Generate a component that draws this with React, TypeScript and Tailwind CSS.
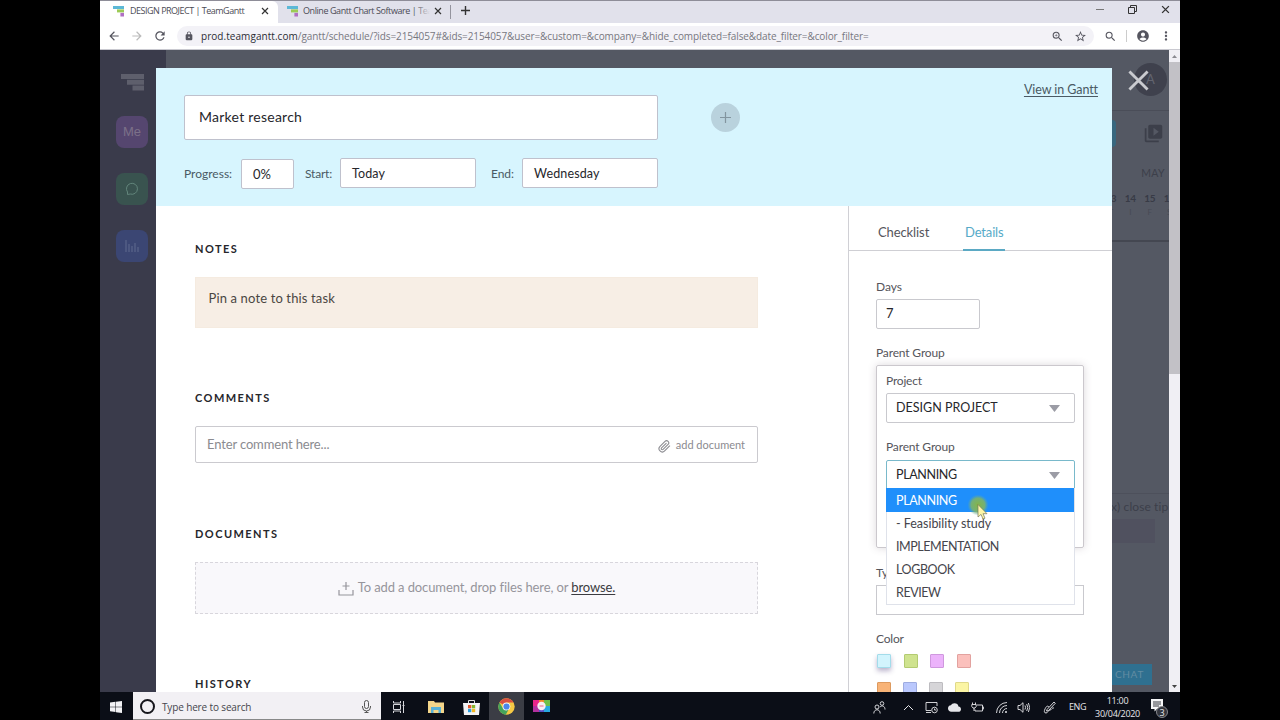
import React from "react";
import { FiPaperclip } from "react-icons/fi";
import {
  MdAccountCircle,
  MdArrowBack,
  MdArrowForward,
  MdCloud,
  MdLock,
  MdMoreVert,
  MdRefresh,
  MdSearch,
  MdStarBorder,
  MdVideoLibrary,
  MdZoomIn,
} from "react-icons/md";

const Logo = () => (
  <svg width="11" height="11" viewBox="0 0 11 11" className="shrink-0">
    <rect x="0" y="0" width="11" height="3" fill="#5cb8d6" />
    <rect x="4" y="3.4" width="7" height="3" fill="#9ccb55" />
    <rect x="7.4" y="6.9" width="3.6" height="3.6" fill="#b06fc4" />
  </svg>
);

const CloseX = ({ size = 8 }: { size?: number }) => (
  <svg width={size} height={size} viewBox="0 0 8 8" stroke="#333" strokeWidth="1.2" className="shrink-0">
    <path d="M1 1l6 6M7 1l-6 6" />
  </svg>
);

const TabStrip = () => (
  <div className="flex h-[23px] items-stretch border-t border-[#8e8d98] bg-[#e1e1eb] text-[9px] text-[#4b4b55]">
    <div className="flex w-[178px] items-center rounded-tr-md bg-white pb-[2px] pl-[13px] pr-[9px]">
      <Logo />
      <span className="ml-[6px] flex-1 whitespace-nowrap tracking-[-0.5px]">DESIGN PROJECT | TeamGantt</span>
      <CloseX />
    </div>
    <div className="flex w-[172px] items-center pb-[2px] pl-[9px] pr-[8px]">
      <Logo />
      <span className="relative ml-[5px] w-[127px] overflow-hidden whitespace-nowrap tracking-[-0.43px]">
        Online Gantt Chart Software | Tea
        <span className="absolute inset-y-0 right-0 w-4 bg-gradient-to-r from-transparent to-[#e1e1eb]" />
      </span>
      <span className="flex-1" />
      <CloseX />
    </div>
    <div className="my-1 w-px bg-[#94949e]" />
    <svg width="9" height="9" viewBox="0 0 9 9" stroke="#333" strokeWidth="1.4" className="mb-[3px] ml-[10px] self-center">
      <path d="M4.5 0v9M0 4.5h9" />
    </svg>
    <div className="flex-1" />
    <div className="mr-[10px] flex w-[74px] items-center justify-between pb-[6px]">
      <span className="h-px w-[8px] bg-[#777]" />
      <svg width="9" height="9" viewBox="0 0 9 9" fill="none" stroke="#333" strokeWidth="1">
        <path d="M.5 2.5h6v6h-6zM2.5 2.5v-2h6v6h-2" />
      </svg>
      <CloseX size={9} />
    </div>
  </div>
);

const AddressBar = () => (
  <div className="flex h-[27px] items-center border-b border-[#c9c9d0] bg-white text-[#55555f]">
    <MdArrowBack className="ml-[7px] h-[14px] w-[14px]" />
    <MdArrowForward className="ml-[9px] h-[14px] w-[14px] text-[#bbb]" />
    <MdRefresh className="ml-[9px] h-[14px] w-[14px]" />
    <div className="ml-[10px] flex h-[20px] w-[917px] items-center rounded-full bg-[#f3f2f7]">
      <MdLock className="ml-[7px] h-[10px] w-[10px]" />
      <span className="ml-[7px] flex-1 whitespace-nowrap text-[10px] tracking-[-0.1px] text-[#777780]">
        <span className="tracking-[0.05px] text-[#2c2c34]">prod.teamgantt.com</span>
        /gantt/schedule/?ids=2154057#&amp;ids=2154057&amp;user=&amp;custom=&amp;company=&amp;hide_completed=false&amp;date_filter=&amp;color_filter=
      </span>
      <MdZoomIn className="h-[13px] w-[13px]" />
      <MdStarBorder className="ml-[10px] mr-[7px] h-[13px] w-[13px]" />
    </div>
    <MdSearch className="ml-[10px] h-[13px] w-[13px]" />
    <span className="ml-[9px] h-3 w-px bg-[#ccc]" />
    <MdAccountCircle className="ml-[9px] h-[14px] w-[14px]" />
    <MdMoreVert className="ml-[9px] h-[14px] w-[14px]" />
  </div>
);

const Sidebar = () => (
  <div className="flex w-[66px] flex-col items-center bg-[#3a3b4b] pr-[2px]">
    <svg width="23" height="17" viewBox="0 0 23 17" fill="#5e5f6c" className="mt-[24px]">
      <path d="M0 0h23v5H0zM6 5.7h17v5H6zM11.5 11.5h11.5v5h-11.5z" />
    </svg>
    <div className="mt-[25px] flex h-[32px] w-[32px] items-center justify-center rounded-lg bg-[#55466f] pb-px font-['Liberation_Sans',sans-serif] text-[13px] text-[#7c7189]">
      Me
    </div>
    <div className="mt-[25px] flex h-[32px] w-[32px] items-center justify-center rounded-lg bg-[#39534f] pb-px">
      <svg width="14" height="14" viewBox="0 0 14 14" fill="none" stroke="#62857b" strokeWidth="1">
        <path d="M2.5 12.5V10A5.500 5.500 0 1 1 5.200 12z" />
      </svg>
    </div>
    <div className="mt-[25px] flex h-[32px] w-[32px] items-center justify-center rounded-lg bg-[#3b4673] pb-px">
      <svg width="14" height="12" viewBox="0 0 14 12" stroke="#606a90" strokeWidth="1">
        <path d="M1 0v12M4 4v8M7 6v6M10 3v9M13 7v5" />
      </svg>
    </div>
  </div>
);

const GanttBackdrop = () => (
  <div className="flex flex-1 flex-col items-end overflow-hidden bg-[#545863] text-[#3c3f4a]">
    <div className="flex h-[61px] w-full justify-end border-b border-[#4a4d58]">
      <div className="mr-[2px] mt-[13px] flex h-[33px] w-[33px] items-center justify-center rounded-full bg-[#3f414d] text-[13px] text-[#62646f]">
        A
      </div>
    </div>
    <div className="mt-[9px] flex h-[27px] items-center">
      <div className="h-full w-[30px] rounded-sm bg-[#38677e]" />
      <MdVideoLibrary className="ml-[27px] mr-[5px] h-[21px] w-[21px]" />
    </div>
    <div className="mr-[4px] mt-[18px] h-[16px] text-[10.5px] leading-4 tracking-[0.4px]">MAY</div>
    <div className="mt-[9px] flex w-[68px] text-[10px] font-bold leading-4 tracking-[-0.3px] text-[#383b46]">
      {["13", "14", "15", "16"].map((d) => (
        <span key={d} className="w-[19.5px] shrink-0 text-center">{d}</span>
      ))}
    </div>
    <div className="flex w-[68px] text-[8px] leading-3 text-[#474a55]">
      {["T", "I", "F", "S"].map((d) => (
        <span key={d} className="w-[19.5px] shrink-0 text-center">{d}</span>
      ))}
    </div>
    <div className="mt-[22px] h-[2px] w-full bg-[#444751]" />
    <div className="mt-[251px] h-[26px] w-[58px] overflow-hidden whitespace-nowrap border-t border-[#4d505b] text-[12px] leading-[25px] tracking-[0.1px]">
      x) close tip
    </div>
    <div className="mr-[14px] h-[24px] w-[50px] bg-[#50515f]" />
    <div className="mr-[17px] mt-auto mb-[7px] flex h-[21px] w-[60px] items-center justify-end bg-[#2f7090] pr-[8px] text-[10px] tracking-[0.7px] text-[#628ca2]">
      CHAT
    </div>
  </div>
);

const Scrollbar = () => (
  <div className="flex w-[11px] flex-col items-center bg-[#f0eff4]">
    <svg width="5" height="12" viewBox="0 0 5 12" fill="#8a8a90">
      <path d="M0 8l2.5-3L5 8z" />
    </svg>
    <div className="h-[312px] w-full bg-[#c2c1c6]" />
    <svg width="5" height="12" viewBox="0 0 5 12" fill="#444" className="mt-auto">
      <path d="M0 5l2.5 3L5 5z" />
    </svg>
  </div>
);

const field = "flex items-center rounded-[2px] border bg-white whitespace-nowrap";

const ModalHeader = () => (
  <div className="flex h-[138px] bg-[#d7f5fe] pl-[28px] pr-[14px] text-[#4a5a64]">
    <div className="w-[474px] pt-[27px]">
      <div className={`${field} h-[45px] border-[#bfc1cd] pb-[2px] pl-[14px] text-[14px] tracking-[0.25px] text-[#26262b]`}>
        Market research
      </div>
      <div className="mt-[18px] flex h-[31px] items-start whitespace-nowrap text-[12px] leading-[31px]">
        <span className="w-[57px]">Progress:</span>
        <div className={`${field} mt-px h-[30px] w-[53px] border-[#bfc1cd] pl-[11px] text-[13px] text-[#26262b]`}>0%</div>
        <span className="ml-[11px] w-[35px] tracking-[-0.2px]">Start:</span>
        <div className={`${field} h-[30px] w-[136px] border-[#bfc1cd] pl-[11px] pt-px text-[12.5px] tracking-[0.1px] text-[#26262b]`}>Today</div>
        <span className="ml-[15px] w-[31px] tracking-[-0.1px]">End:</span>
        <div className={`${field} h-[30px] flex-1 border-[#bfc1cd] pl-[11px] pt-px text-[12.5px] tracking-[0.15px] text-[#26262b]`}>Wednesday</div>
      </div>
    </div>
    <div className="ml-[53px] mt-[35px] flex h-[29px] w-[29px] items-center justify-center rounded-full bg-[#b9d2dd]">
      <svg width="11" height="11" viewBox="0 0 11 11" stroke="#83959f" strokeWidth="1.2">
        <path d="M5.5 0v11M0 5.5h11" />
      </svg>
    </div>
    <span className="ml-auto mt-[12px] text-[12.5px] leading-[19px] tracking-[-0.08px] underline underline-offset-2">View in Gantt</span>
  </div>
);

const Heading = ({ children }: { children: React.ReactNode }) => (
  <h3 className="h-4 text-[11px] font-bold leading-[17px] tracking-[1.45px] text-[#26262b]">{children}</h3>
);

const ModalMain = () => (
  <div className="w-[692px] overflow-hidden pl-[39px] pr-[90px] pt-[34px]">
    <Heading>NOTES</Heading>
    <div className="mt-[21px] h-[51px] border border-[#f5ebe0] bg-[#f7eee5] pl-[12.5px] pt-[10px] text-[13px] leading-5 tracking-[0.14px] text-[#4a4642]">
      Pin a note to this task
    </div>
    <div className="mt-[61px]">
      <Heading>COMMENTS</Heading>
    </div>
    <div className="mt-[21px] flex h-[37px] items-center rounded-[2px] border border-[#cbcacf] pl-[11px] pr-[12px] text-[13px] text-[#8b8b90]">
      <span className="tracking-[-0.14px]">Enter comment here...</span>
      <FiPaperclip className="ml-auto mt-[3px] h-[13px] w-[13px]" />
      <span className="ml-[5px] pt-px text-[11px]">add document</span>
    </div>
    <div className="mt-[62px]">
      <Heading>DOCUMENTS</Heading>
    </div>
    <div className="mt-[21px] flex h-[52px] items-center justify-center border border-dashed border-[#d8d6dc] bg-[#f9f8fb] text-[13px] tracking-[-0.11px] text-[#96959c]">
      <svg width="16" height="15" viewBox="0 0 16 15" fill="none" stroke="currentColor" strokeWidth="1.2" className="mr-[4px]">
        <path d="M1 9v5h14V9M8 1v8M4.500 5h7" />
      </svg>
      <span>To add a document, drop files here, or <span className="text-[#3b3b40] underline underline-offset-2">browse.</span></span>
    </div>
    <div className="mt-[61px]">
      <Heading>HISTORY</Heading>
    </div>
  </div>
);

const Caret = () => (
  <svg width="11" height="7" viewBox="0 0 11 7" fill="#9b9ca5" className="ml-auto mr-[14px]">
    <path d="M0 0h11L5.5 7z" />
  </svg>
);

const groups = [
  { name: "PLANNING", tracking: "tracking-[-0.35px]" },
  { name: "- Feasibility study", tracking: "tracking-[-0.03px]" },
  { name: "IMPLEMENTATION", tracking: "tracking-[-0.45px]" },
  { name: "LOGBOOK", tracking: "tracking-[-0.4px]" },
  { name: "REVIEW", tracking: "tracking-[-0.45px]" },
];

const Dropdown = () => (
  <div className="absolute -left-px top-[27px] z-10 w-[189px] border border-t-0 border-[#dfe2ea] bg-white text-[12.5px] text-[#45454c]">
    {groups.map((g, i) => (
      <div
        key={g.name}
        className={`${g.tracking} ${
          i === 0
            ? "-ml-px flex h-[24px] items-center bg-[#1f8ffb] pl-[10px] pt-[2px] text-white"
            : "flex h-[23px] items-center pl-[9px] pt-[2px]"
        }`}
      >
        {g.name}
      </div>
    ))}
    {/* mouse pointer with the click highlight */}
    <svg width="24" height="28" viewBox="0 0 24 28" className="absolute left-[80px] top-[6px]">
      <defs>
        <radialGradient id="click">
          <stop offset="0" stopColor="#86b545" />
          <stop offset="0.65" stopColor="#7cb36a" stopOpacity="0.9" />
          <stop offset="1" stopColor="#5aa5a8" stopOpacity="0" />
        </radialGradient>
      </defs>
      <circle cx="11" cy="11" r="10.5" fill="url(#click)" />
      <path d="M11 10.5v12.5l3-2.600 2 4.600 2-.8-2-4.500h4z" fill="#fbf6a8" stroke="#77775c" strokeWidth="0.7" />
    </svg>
  </div>
);

const colors = [
  [
    "bg-[#d2f4fd] border-[#a3dcea] shadow-[0_3px_5px_rgba(60,40,110,0.35)]",
    "bg-[#cfe38f] border-[#b3cb72]",
    "bg-[#ecb3fb] border-[#cf98de]",
    "bg-[#fbc0bc] border-[#e2a29f]",
  ],
  [
    "bg-[#f8b377] border-[#dd9a5f]",
    "bg-[#bac8fd] border-[#9eace0]",
    "bg-[#d6d5d8] border-[#bdbcc0]",
    "bg-[#fbf5a4] border-[#e0d98a]",
  ],
];

const ModalDetails = () => (
  <div className="flex-1 overflow-hidden border-l border-[#d0d0d5] text-[#55555b]">
    <div className="flex h-[45px] border-b border-[#cfcfd4] pl-[29px] text-[13px]">
      <span className="w-[85px] pt-[17px] leading-[18px] tracking-[-0.1px]">Checklist</span>
      <span className="h-[45px] w-[42px] border-b-2 border-[#5ba9c4] pl-[2px] pt-[17px] leading-[18px] tracking-[-0.15px] text-[#56aac8]">Details</span>
    </div>
    <div className="px-[27px] pt-[27px] text-[12px]">
      <div className="h-4 leading-[17px]">Days</div>
      <div className={`${field} mt-[5px] h-[30px] w-[104px] border-[#c9c9ce] pl-[9px] text-[13px] text-[#26262b]`}>7</div>
      <div className="mt-[16px] h-4 leading-4 tracking-[-0.15px]">Parent Group</div>
      <div className="mt-[4px] h-[183px] w-[208px] rounded-[2px] border border-[#cbc8cd] px-[9px] pt-[7px] shadow-[0_0_8px_rgba(80,60,80,0.2)]">
        <div className="h-4 leading-4 tracking-[-0.2px]">Project</div>
        <div className={`${field} mt-[4px] h-[30px] w-[189px] border-[#c9c9ce] pl-[9px] pt-px text-[12.5px] text-[#26262b]`}>
          DESIGN PROJECT
          <Caret />
        </div>
        <div className="mt-[16px] h-4 leading-4 tracking-[-0.15px]">Parent Group</div>
        <div className={`${field} relative mt-[5px] h-[30px] w-[189px] border-[#79b9cb] pl-[9px] text-[12.5px] text-[#26262b]`}>
          <span className="tracking-[-0.35px]">PLANNING</span>
          <Caret />
          <Dropdown />
        </div>
      </div>
      <div className="mt-[16px] h-4 leading-[17px]">Type</div>
      <div className="mt-[5px] h-[30px] w-[208px] border border-[#c9c9ce]" />
      <div className="mt-[16px] h-4 leading-4 tracking-[-0.2px]">Color</div>
      {colors.map((row, i) => (
        <div key={i} className={i === 0 ? "ml-px mt-[7px] flex gap-[12.5px]" : "ml-px mt-[14px] flex gap-[12px]"}>
          {row.map((c) => (
            <div key={c} className={`h-[14px] w-[14px] rounded-[1px] border ${c}`} />
          ))}
        </div>
      ))}
    </div>
  </div>
);

const TaskModal = () => (
  <div className="absolute left-[56px] top-[18px] flex h-[624px] w-[956px] flex-col bg-white">
    <ModalHeader />
    <div className="flex min-h-0 flex-1">
      <ModalMain />
      <ModalDetails />
    </div>
    <svg width="21" height="21" viewBox="0 0 22 22" stroke="#c9cacf" strokeWidth="3" className="absolute -right-[37px] top-[2px]">
      <path d="M1.5 1.5l19 19M20.5 1.5l-19 19" />
    </svg>
  </div>
);

const trayIcon = "h-[13px] w-[13px] shrink-0";

const Taskbar = () => (
  <div className="flex h-[28px] items-center bg-[#0b0e17] pt-[2px] text-[#e6e6ea]">
    <svg width="12" height="12" viewBox="0 0 12 12" fill="#f2f2f5" className="ml-[10px] mr-[11px]">
      <path d="M0 1.6l5.5-.8v4.9H0zM6 .7l6-.7v5.700H6zM0 6.200h5.500v4.900L0 10.300zM6 6.200h6V12l-6-.8z" />
    </svg>
    <div className="-mt-[2px] flex h-[28px] w-[248px] items-center border-b border-[#888] bg-[#f2f0f4] pl-[7px] pr-[10px] pt-[2px] text-[10px] text-[#45454d]">
      <span className="h-[15px] w-[15px] rounded-full border-2 border-[#16161c]" />
      <span className="ml-[7px] flex-1 whitespace-nowrap pt-px tracking-[-0.14px]">Type here to search</span>
      <svg width="9" height="13" viewBox="0 0 9 13" fill="none" stroke="#555" strokeWidth="1">
        <path d="M2.5 2.5a2 2 0 0 1 4 0v4a2 2 0 0 1-4 0zM.5 6v1a4 4 0 0 0 8 0V6M4.500 11v2M2.500 12.500h4" />
      </svg>
    </div>
    <svg width="13" height="12" viewBox="0 0 13 12" fill="none" stroke="#d5d5da" strokeWidth="1" className="ml-[11px]">
      <path d="M1.5 0v2h7V0M1.500 12v-2h7v2M1.500 3.500h7v5h-7zM11.500 0v12M10.500 4.500h2" />
    </svg>
    <svg width="16" height="13" viewBox="0 0 16 13" className="-mt-px ml-[23px]">
      <path d="M0 1h6l1 1.5h9V13H0z" fill="#f3d58a" />
      <path d="M3 13V7h10v6h-2.5v-3h-5v3z" fill="#58b1d8" />
    </svg>
    <svg width="17" height="16" viewBox="0 0 17 16" className="-mt-px ml-[19px]">
      <path d="M5.5 5V1.5h6V5" fill="none" stroke="#ddd" />
      <path d="M0 4h17l-1 12H1z" fill="#f3f3f5" />
      <path d="M5 6h3.3v3.3H5z" fill="#e2582f" />
      <path d="M8.9 6h3.3v3.3H8.9z" fill="#84b52a" />
      <path d="M5 9.9h3.3v3.3H5z" fill="#2c9fe0" />
      <path d="M8.9 9.9h3.3v3.3H8.9z" fill="#f3b720" />
    </svg>
    <div className="-mt-[2px] ml-[9px] flex h-[28px] w-[35px] items-center justify-center bg-[#3b3d45] pt-px">
      <svg width="17" height="17" viewBox="0 0 17 17">
        <circle cx="8.5" cy="8.5" r="8.2" fill="#f6c944" />
        <path d="M8.5 8.5L1.4 4.4A8.2 8.2 0 0 1 15.6 4.4H8.5z" fill="#d94f41" />
        <path d="M1.4 4.4A8.2 8.2 0 0 0 7.8 16.7l3.3-6.2H5z" fill="#45a45b" />
        <circle cx="8.5" cy="8.5" r="3.9" fill="#f6f6f6" />
        <circle cx="8.5" cy="8.5" r="3.1" fill="#4b86e8" />
      </svg>
    </div>
    <svg width="17" height="12" viewBox="0 0 17 12" className="-mt-[2px] ml-[9px]">
      <path d="M0 0h6v6H0z" fill="#e8268a" />
      <path d="M6 0h6v6H6z" fill="#f08a2c" />
      <path d="M11 0h6v6h-6z" fill="#6cc04a" />
      <path d="M0 6h6v6H0z" fill="#b3309f" />
      <path d="M6 6h6v6H6z" fill="#5a4fc4" />
      <path d="M11 6h6v6h-6z" fill="#27a9e0" />
      <circle cx="8.5" cy="6" r="4.2" fill="#f7eef4" />
      <path d="M6.5 5.5h4v1h-4z" fill="#e8628a" />
    </svg>
    <div className="flex-1" />
    <svg viewBox="0 0 13 13" fill="none" stroke="currentColor" strokeWidth="0.9" className={trayIcon}>
      <circle cx="4" cy="6" r="2" />
      <circle cx="9" cy="2.5" r="1.8" />
      <path d="M.8 12.5c0-5 6.4-5 6.4 0M7 6c2-2 5-1 5 2.500" />
    </svg>
    <svg viewBox="0 0 13 13" fill="none" stroke="currentColor" strokeWidth="1" className={`${trayIcon} ml-[16px]`}>
      <path d="M2 9l4.5-4.500L11 9" />
    </svg>
    <svg viewBox="0 0 13 13" fill="none" stroke="currentColor" strokeWidth="0.9" className={`${trayIcon} ml-[10px]`}>
      <path d="M6 9.500H1v-8h11V5M1 11.500h5" />
      <circle cx="9.5" cy="9" r="2.8" />
      <path d="M9.500 7.500V9H11" />
    </svg>
    <MdCloud className={`${trayIcon} ml-[10px]`} />
    {/* battery with the plug */}
    <svg viewBox="0 0 13 13" fill="none" stroke="currentColor" strokeWidth="0.9" className={`${trayIcon} ml-[10px]`}>
      <path d="M6 4h5.500v6H4V8.500M11.500 6h1.200v2h-1.200M1.500 1.500v2M4.500 1.500v2M.8 3.500h4.400v2L4 7H2L.8 5.500zM3 7v3" />
    </svg>
    <svg viewBox="0 0 13 13" fill="none" stroke="currentColor" strokeWidth="0.9" className={`${trayIcon} ml-[11px]`}>
      <path d="M1.500 12A10.500 10.500 0 0 1 12 1.500M4.500 12A7.500 7.500 0 0 1 12 4.500M7.500 12A4.500 4.500 0 0 1 12 7.500" />
      <circle cx="11" cy="11" r="1" fill="currentColor" stroke="none" />
    </svg>
    <svg viewBox="0 0 13 13" fill="none" stroke="currentColor" strokeWidth="0.9" className={`${trayIcon} ml-[9px]`}>
      <path d="M1 4.500h2l3-2.800v9.600L3 8.500H1zM8 4.500q1.200 2 0 4M9.700 3q2.200 3.500 0 7M11.400 2q2.600 4.500 0 9" />
    </svg>
    <svg viewBox="0 0 13 13" fill="none" stroke="currentColor" strokeWidth="0.9" className={`${trayIcon} ml-[13px]`}>
      <path d="M4 8.500L11 1l1.300 1.300L5.500 9.500 3.500 10zM6 6c-2-2-3 0-4 2s-1 4 1 4 2-3 4-3 2-3 4-2" />
    </svg>
    <span className="ml-[13px] w-[18px] whitespace-nowrap text-[9px] tracking-[-0.4px]">ENG</span>
    <div className="ml-[7px] w-[47px] whitespace-nowrap text-center text-[9px] leading-[13px] tracking-[-0.28px]">
      <div>11:00</div>
      <div>30/04/2020</div>
    </div>
    <div className="relative ml-[10px] mr-[12px] h-[20px] w-[17px]">
      <svg width="12" height="13" viewBox="0 0 12 13" className="mt-[2px]">
        <path d="M0 0h12v10H6L3.500 12.500V10H0z" fill="#f4f4f6" />
        <path d="M2 3h8M2 5h8M2 7h6" stroke="#22252e" strokeWidth="0.9" />
      </svg>
      <span className="absolute -bottom-px right-0 flex h-[12px] w-[12px] items-center justify-center rounded-full border border-[#85868c] bg-[#32343c] text-[9px] leading-none">
        3
      </span>
    </div>
  </div>
);

export default function App() {
  return (
    <div className="flex h-[720px] w-[1280px] justify-center overflow-hidden bg-black font-['Open_Sans',sans-serif]">
      <div className="flex w-[1080px] flex-col">
        <TabStrip />
        <AddressBar />
        <div className="relative flex h-[642px] font-['Lato',sans-serif]">
          <Sidebar />
          <GanttBackdrop />
          <Scrollbar />
          <TaskModal />
        </div>
        <Taskbar />
      </div>
    </div>
  );
}
